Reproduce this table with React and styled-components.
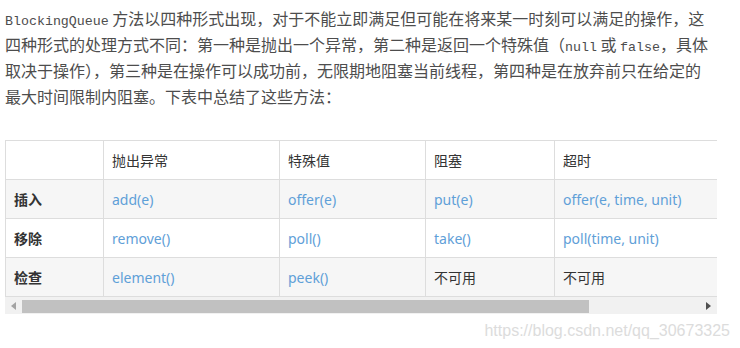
import React from "react"
import styled, { createGlobalStyle } from "styled-components"

const GlobalStyle = createGlobalStyle`
  body {
    margin: 0;
    background: #fff;
  }
`

const Page = styled.div`
  width: 740px;
  height: 348px;
  padding: 5px 0 0 5px;
  box-sizing: border-box;
  position: relative;
  overflow: hidden;
  font-family: "Noto Sans", "Noto Sans CJK SC", sans-serif;
`

const Paragraph = styled.p`
  margin: 0;
  font-size: 16px;
  line-height: 26px;
  color: #4d4d4d;
  font-family: "Noto Sans CJK SC", sans-serif;
`

const Line = styled.span`
  display: block;
  height: 26px;
  white-space: nowrap;
`

const Code = styled.code`
  font-family: "Liberation Mono", monospace;
  font-size: 13.3px;
  line-height: 1;
  color: #4d4d4d;
`

const TableBox = styled.div`
  margin-top: 31px;
  width: 712px;
`

const TableClip = styled.div`
  overflow: hidden;
  width: 712px;
`

const Table = styled.table`
  border-collapse: collapse;
  width: 851px;
  table-layout: fixed;
  font-size: 14px;
  color: #333;
`

const Row = styled.tr`
  background: ${p => (p.$shade ? "#f6f6f6" : "#fff")};
  height: 39px;
`

const Cell = styled.td`
  border: 1px solid #ddd;
  padding: 0 8px;
  white-space: nowrap;
  font-family: "Noto Sans", "Noto Sans CJK SC", sans-serif;
  color: ${p => (p.$link ? "#5fa0d8" : "#333")};
  font-weight: ${p => (p.$head ? 700 : 400)};
`

const Scrollbar = styled.div`
  display: flex;
  align-items: center;
  height: 17px;
  background: #f1f1f1;
`

const Arrow = styled.div`
  width: 17px;
  height: 17px;
  display: flex;
  align-items: center;
  justify-content: center;
  flex: none;
`

const Track = styled.div`
  flex: 1;
  height: 17px;
  display: flex;
  align-items: center;
`

const Thumb = styled.div`
  height: 13px;
  margin-top: 2px;
  background: #c1c1c1;
`

const Watermark = styled.div`
  position: absolute;
  right: 10px;
  bottom: 8px;
  font-family: "Liberation Sans", Arial, sans-serif;
  font-size: 16px;
  color: #dcdcdc;
`

const columns = [98, 176, 146, 129, 302]

const rows = [
  { head: "插入", cells: ["add(e)", "offer(e)", "put(e)", "offer(e, time, unit)"], link: [1, 1, 1, 1] },
  { head: "移除", cells: ["remove()", "poll()", "take()", "poll(time, unit)"], link: [1, 1, 1, 1] },
  { head: "检查", cells: ["element()", "peek()", "不可用", "不可用"], link: [1, 1, 0, 0] },
]

function ArrowIcon({ dir, color }) {
  return (
    <svg width="5" height="8" viewBox="0 0 5 8">
      {dir === "left" ? (
        <polygon points="5,0 5,8 0,4" fill={color} />
      ) : (
        <polygon points="0,0 0,8 5,4" fill={color} />
      )}
    </svg>
  )
}

export default function App() {
  return (
    <Page>
      <GlobalStyle />
      <Paragraph>
        <Line>
          <Code>BlockingQueue</Code> 方法以四种形式出现，对于不能立即满足但可能在将来某一时刻可以满足的操作，这
        </Line>
        <Line>
          四种形式的处理方式不同：第一种是抛出一个异常，第二种是返回一个特殊值（<Code>null</Code> 或 <Code>false</Code>，具体
        </Line>
        <Line>取决于操作），第三种是在操作可以成功前，无限期地阻塞当前线程，第四种是在放弃前只在给定的</Line>
        <Line>最大时间限制内阻塞。下表中总结了这些方法：</Line>
      </Paragraph>

      <TableBox>
        <TableClip>
          <Table>
            <colgroup>
              {columns.map((w, i) => (
                <col key={i} style={{ width: w }} />
              ))}
            </colgroup>
            <tbody>
              <Row>
                <Cell />
                <Cell>抛出异常</Cell>
                <Cell>特殊值</Cell>
                <Cell>阻塞</Cell>
                <Cell>超时</Cell>
              </Row>
              {rows.map((r, i) => (
                <Row key={r.head} $shade={i % 2 === 0}>
                  <Cell $head>{r.head}</Cell>
                  {r.cells.map((c, j) => (
                    <Cell key={j} $link={r.link[j] === 1}>
                      {c}
                    </Cell>
                  ))}
                </Row>
              ))}
            </tbody>
          </Table>
        </TableClip>
        <Scrollbar>
          <Arrow>
            <ArrowIcon dir="left" color="#a3a3a3" />
          </Arrow>
          <Track>
            <Thumb style={{ width: 567 }} />
          </Track>
          <Arrow>
            <ArrowIcon dir="right" color="#505050" />
          </Arrow>
        </Scrollbar>
      </TableBox>

      <Watermark>https://blog.csdn.net/qq_30673325</Watermark>
    </Page>
  )
}
